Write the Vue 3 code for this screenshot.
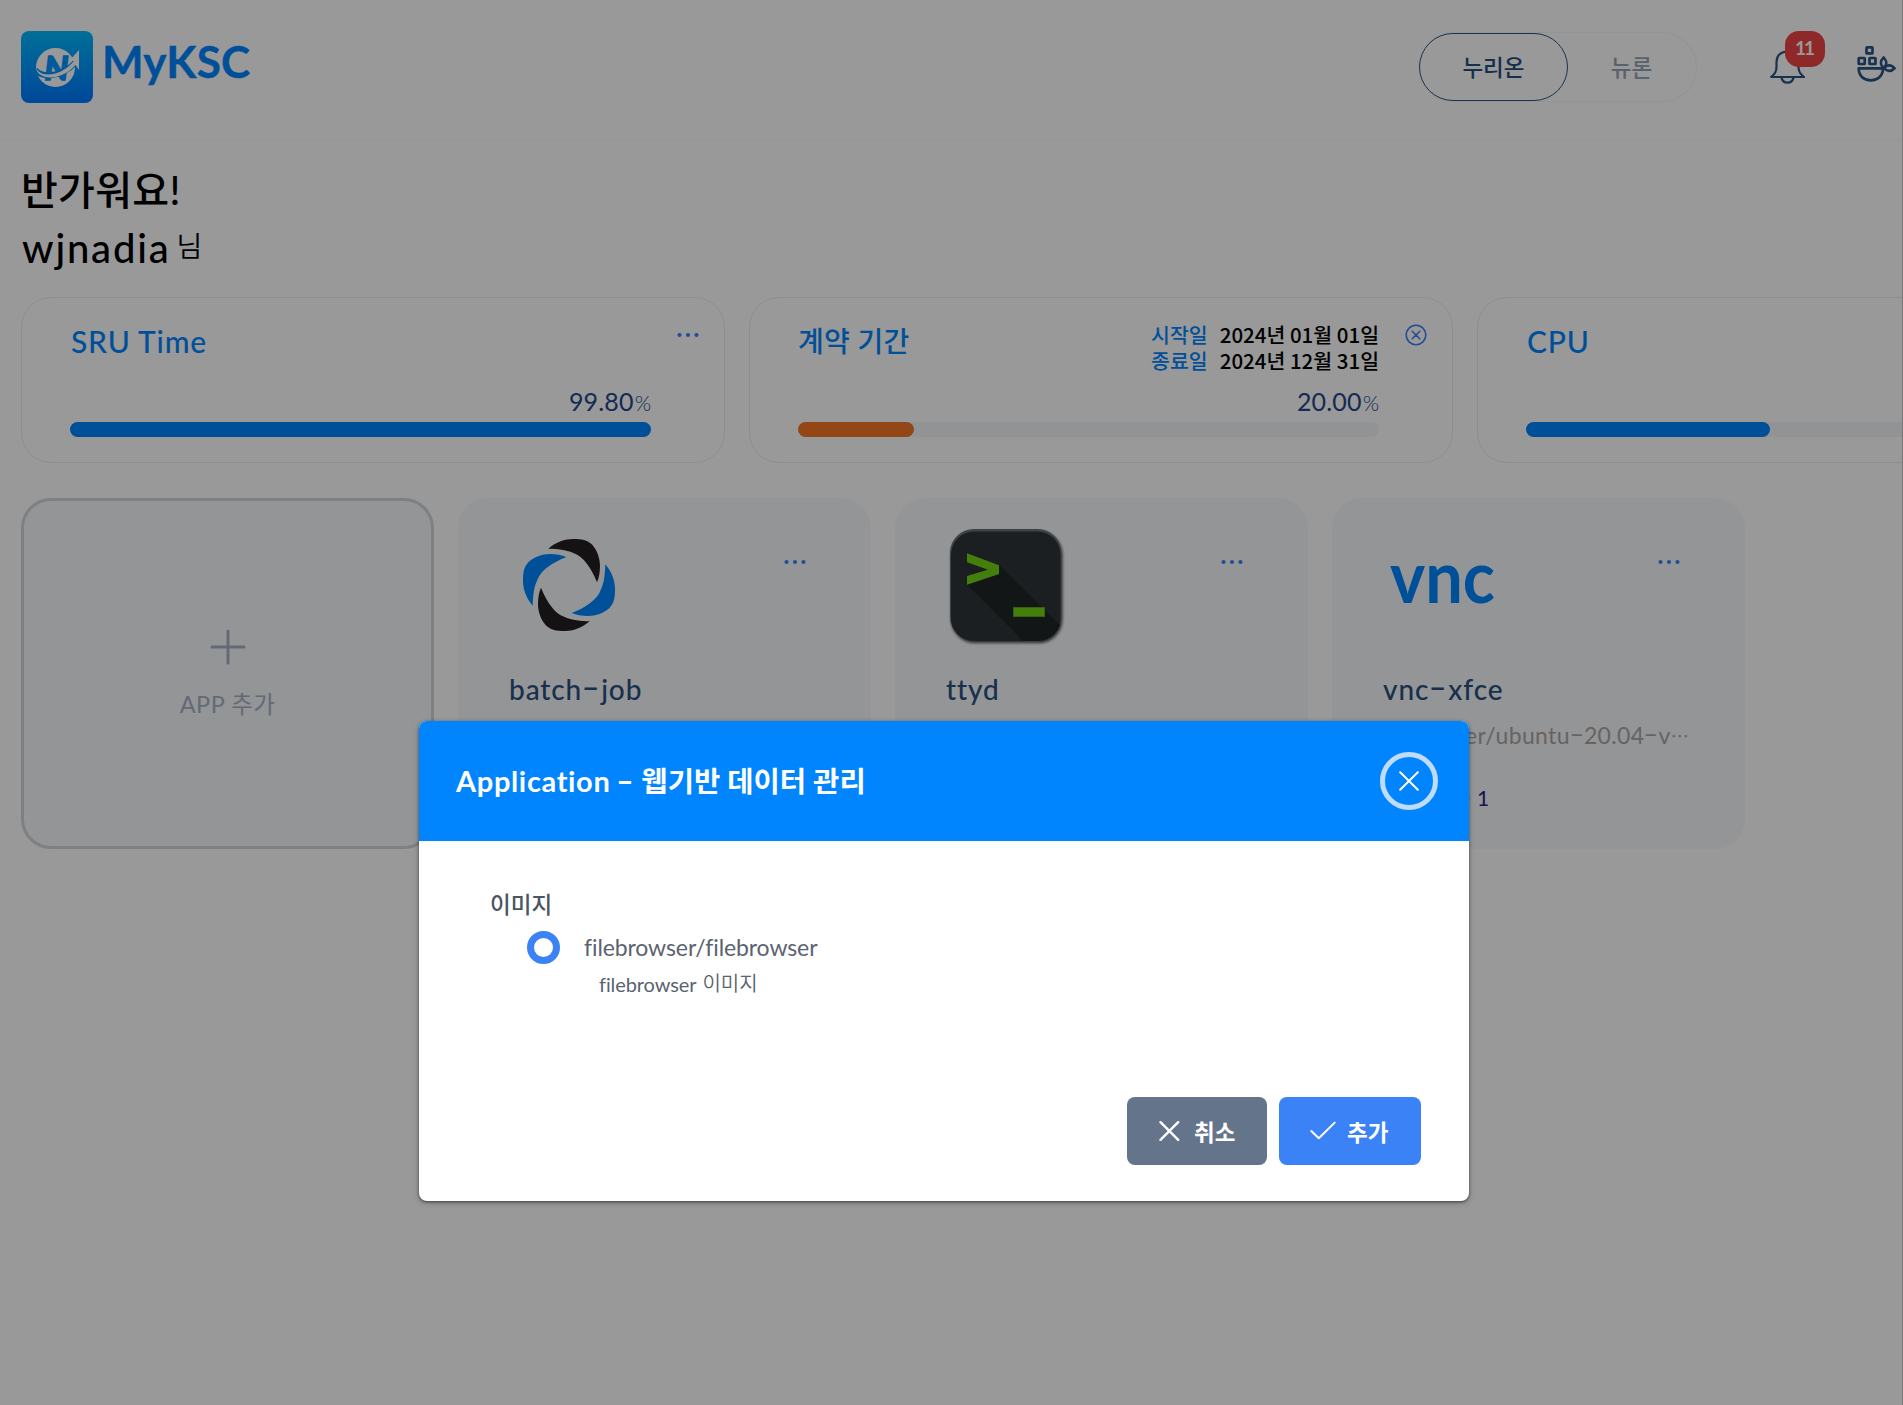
<script setup>
const stats = [
  { title: 'SRU Time', value: '99.80', width: '100%', color: '#0085ff', menu: 'dots' },
  {
    title: '계약 기간', value: '20.00', width: '20%', color: '#f57625', menu: 'close', korean: true,
    dates: [{ label: '시작일', date: '2024년 01월 01일' }, { label: '종료일', date: '2024년 12월 31일' }],
  },
  { title: 'CPU', value: '', width: '42%', color: '#0085ff', menu: 'dots' },
]
const apps = [
  { name: 'batch-job', icon: 'batch' },
  { name: 'ttyd', icon: 'ttyd' },
  { name: 'vnc-xfce', icon: 'vnc', image: 'er/ubuntu-20.04-v', count: 1 },
]
// Splits a name so that its hyphens can be drawn wide and raised.
const parts = (text) => text.split(/(-)/)
</script>

<template>
  <div class="screen">
    <header class="topbar">
      <div class="brand">
        <svg class="brand-mark" viewBox="0 0 72 72">
          <defs>
            <linearGradient id="brandFill" x1="0" y1="0" x2="0" y2="1">
              <stop offset="0" stop-color="#00b9ff" /><stop offset="1" stop-color="#0078ff" />
            </linearGradient>
          </defs>
          <rect width="72" height="72" rx="8" fill="url(#brandFill)" />
          <circle cx="34.5" cy="36.5" r="19.5" fill="#fff" />
          <text x="23.5" y="49" class="brand-n" textLength="24" lengthAdjust="spacingAndGlyphs">N</text>
          <path d="M14 38 C17 46 38 49 55 31" fill="none" stroke="#0094ff" stroke-width="6" />
          <path d="M15.5 33 C12 45 36 50 53 30 L48 30 L58 19 V39 L54.500 34 C37 54 11 47 15.500 33Z" fill="#fff" />
        </svg>
        <span class="brand-name">MyKSC</span>
      </div>
      <div class="switch">
        <button class="switch-item active">누리온</button>
        <button class="switch-item">뉴론</button>
      </div>
      <div class="bell">
        <svg width="36" height="35" viewBox="0 0 36 35" fill="none" stroke="#2b5486" stroke-width="2.200" stroke-linejoin="round" stroke-linecap="round">
          <path d="M1.200 27 C4.500 24 6.500 22 6.500 17 V12 C6.500 5.500 11 1.500 17.500 1.500 C24 1.500 28.500 5.500 28.500 12 V17 C28.500 22 30.500 24 34 27Z" />
          <path d="M11.500 27.500 C12.500 34.300 22.500 34.300 23.500 27.500" />
        </svg>
        <span class="badge">11</span>
      </div>
      <svg class="bowl" width="40" height="37" viewBox="0 0 40 37" fill="none" stroke="#2b5486" stroke-width="2.700">
        <rect x="9.500" y="1.400" width="6" height="6" rx=".5" />
        <rect x="1.700" y="12" width="6" height="6" rx=".5" />
        <rect x="12.500" y="12" width="6" height="6" rx=".5" />
        <path d="M1.700 22.300 H26 C26 30 20.500 34.300 13.800 34.300 C7 34.300 1.700 30 1.700 22.300Z" stroke-linejoin="round" />
        <path d="M26.700 11.500 C23 15 23 19 26.500 21.500 C30.500 19 30 15 26.700 11.500Z" stroke-width="2.500" />
        <path d="M27 22 C30 18.500 34.500 18.500 37.500 22.300 C34 26 30 25.800 27 22Z" stroke-width="2.700" />
      </svg>
    </header>

    <main class="content">
      <section class="hello">
        <p class="hello-line">반가워요!</p>
        <p class="hello-user"><span class="user">wjnadia</span><span class="suffix">님</span></p>
      </section>

      <section class="stats">
        <article v-for="s in stats" :key="s.title" class="stat">
          <div class="stat-main">
            <div class="stat-head">
              <h2 :class="{ korean: s.korean }">{{ s.title }}</h2>
              <dl v-if="s.dates" class="dates">
                <div v-for="d in s.dates" :key="d.label"><dt>{{ d.label }}</dt><dd>{{ d.date }}</dd></div>
              </dl>
            </div>
            <p class="value"><template v-if="s.value"><span class="num">{{ s.value }}</span><span class="unit">%</span></template></p>
            <div class="track"><div class="fill" :style="{ width: s.width, background: s.color }"></div></div>
          </div>
          <svg v-if="s.menu === 'dots'" class="menu" width="22" height="22" viewBox="0 0 22 22" fill="#3b82f6">
            <circle cx="2.500" cy="11" r="2.100" /><circle cx="11" cy="11" r="2.100" /><circle cx="19.500" cy="11" r="2.100" />
          </svg>
          <svg v-else class="menu" width="22" height="22" viewBox="0 0 22 22" fill="none" stroke="#3b82f6" stroke-width="1.600" stroke-linecap="round">
            <circle cx="11" cy="11" r="9.800" /><path d="M7.200 7.200 L14.800 14.800 M14.800 7.200 L7.200 14.800" />
          </svg>
        </article>
      </section>

      <section class="apps">
        <article class="app add">
          <svg width="36" height="36" viewBox="0 0 36 36" stroke="#a6b1c3" stroke-width="3" stroke-linecap="round"><path d="M2 18 H34 M18 2 V34" /></svg>
          <span>APP 추가</span>
        </article>
        <article v-for="a in apps" :key="a.name" class="app">
          <div class="app-top">
            <svg v-if="a.icon === 'batch'" class="i-batch" width="92" height="92" viewBox="0 0 92 92">
              <g v-for="n in 4" :key="n" :transform="`rotate(${n * 90} 46 46)`">
                <path :fill="n % 2 ? '#0085ff' : '#231f20'" d="M25.300 9.700 C33 3 42 0 50 0 C59 0 64 1 69 5.500 C74 11 77 19 77 27 C77 33 76 39 74 43.300 C71 36 68 30 63.700 24.500 C60 19.500 56 16 50.300 14 C43 10.500 34 10 25.300 9.700Z" />
              </g>
            </svg>
            <svg v-else-if="a.icon === 'ttyd'" class="i-ttyd" width="112" height="112" viewBox="0 0 112 112">
              <defs><clipPath id="tile"><rect width="111.500" height="112" rx="24" /></clipPath></defs>
              <g clip-path="url(#tile)">
                <rect width="112" height="112" fill="#6b6f72" />
                <rect x="1" y="2.500" width="109.500" height="110" rx="23" fill="#2f3537" />
                <path d="M17 33 L49 36 L112 98 V112 H73 L17 55.700 L38 41Z" fill="#202527" />
                <path d="M17 24.300 L49 36.300 V45 L17 55.700 V47 L38 40.700 L17 33.300Z" fill="#73d413" />
                <rect x="63.500" y="78.500" width="31" height="9" fill="#73d413" stroke="#5aa512" />
              </g>
            </svg>
            <svg v-else class="i-vnc" width="106" height="40" viewBox="0 0 106 40"><text x="0" y="38" textLength="105" lengthAdjust="spacingAndGlyphs">vnc</text></svg>
            <svg class="menu" width="22" height="22" viewBox="0 0 22 22" fill="#3b82f6">
              <circle cx="2.500" cy="11" r="2.100" /><circle cx="11" cy="11" r="2.100" /><circle cx="19.500" cy="11" r="2.100" />
            </svg>
          </div>
          <h3><span v-for="(t, i) in parts(a.name)" :key="i" :class="{ dash: t === '-' }">{{ t }}</span></h3>
          <p v-if="a.image" class="image"><span v-for="(t, i) in parts(a.image)" :key="i" :class="{ dash: t === '-' }">{{ t }}</span><span class="more">…</span></p>
          <p v-if="a.count" class="count"><i></i><span>{{ a.count }}</span></p>
        </article>
      </section>
    </main>

    <div class="mask">
      <div class="dialog">
        <div class="dialog-head">
          <h1><span class="lat">Application</span> <span class="lat dash">-</span> <span>웹기반 데이터 관리</span></h1>
          <button class="close">
            <svg width="20" height="20" viewBox="0 0 20 20" stroke="#fff" stroke-width="2" stroke-linecap="round"><path d="M1.200 1.200 L18.800 18.800 M18.800 1.200 L1.200 18.800" /></svg>
          </button>
        </div>
        <div class="dialog-body">
          <p class="label">이미지</p>
          <div class="option"><span class="radio"></span><span class="opt">filebrowser/filebrowser</span></div>
          <p class="note"><span class="note-l">filebrowser</span><span class="note-k">이미지</span></p>
        </div>
        <div class="dialog-foot">
          <button class="btn cancel">
            <svg width="21" height="20" viewBox="0 0 21 20" stroke="#fff" stroke-width="2.400" stroke-linecap="round"><path d="M1.500 1.200 L19.200 18.800 M19.200 1.200 L1.500 18.800" /></svg>
            <span>취소</span>
          </button>
          <button class="btn add-btn">
            <svg width="26" height="20" viewBox="0 0 26 20" fill="none" stroke="#fff" stroke-width="2" stroke-linecap="round" stroke-linejoin="round"><path d="M1.300 10 L8.800 17.300 L24.700 1.600" /></svg>
            <span>추가</span>
          </button>
        </div>
      </div>
    </div>
  </div>
</template>

<style>
body { margin: 0; overflow: hidden; background: #fff; }
</style>

<style scoped>
* { box-sizing: border-box; margin: 0; padding: 0; }
.screen {
  position: relative; width: 1903px; height: 1405px; overflow: hidden; background: #fff; color: #000;
  font-family: Lato, "Noto Sans CJK KR", sans-serif; font-variant-ligatures: none;
}
button { font-family: inherit; border: 0; background: none; }
svg { display: block; flex: none; }
.dash { display: inline-block; transform: translateY(-2px) scaleX(1.75); text-align: center; }

.topbar { display: flex; align-items: flex-start; height: 140px; padding-left: 21px; border-bottom: 1px solid #f8f8fa; }
.brand { display: flex; width: 1397px; padding-top: 31px; }
.brand-mark { width: 72px; height: 72px; }
.brand-n { font: italic 900 33px Lato, sans-serif; fill: #0094ff; stroke: #0094ff; stroke-width: 1.5px; }
.brand-name { margin-left: 9px; font-size: 44px; font-weight: 700; line-height: 60px; letter-spacing: .2px; color: #0085ff; -webkit-text-stroke: .4px #0085ff; }
.switch { display: flex; width: 279px; height: 70px; margin-top: 32px; padding: 1px; border-radius: 35px; border: 1px solid #f4f5f6; border-left-color: transparent; }
.switch-item { width: 128px; color: #94a3b8; font: 500 22.500px "Noto Sans CJK KR", sans-serif; height: 68px; margin-top: -1px; padding-bottom: 2px; }
.switch-item.active { width: 150px; margin-left: -1px; border: 1px solid #2b5486; border-radius: 34px; color: #264f80; }
.bell { position: relative; width: 36px; margin: 50px 0 0 73px; }
.badge { position: absolute; left: 15px; top: -19px; width: 40px; height: 36px; border-radius: 14px; background: #ef4444; color: #fff; font-size: 19px; font-weight: 700; line-height: 34px; text-align: center; letter-spacing: -2px; padding-right: 2px; }
.bowl { margin: 46px 0 0 51px; }

.content { padding-left: 21px; }
.hello { height: 157px; padding-top: 22px; }
.hello-line { font-size: 40px; font-weight: 500; line-height: 57px; letter-spacing: .3px; }
.hello-user { display: flex; height: 60px; align-items: flex-start; }
.user { margin-left: 1px; font-size: 40px; line-height: 58px; font-weight: 500; letter-spacing: 1.800px; }
.suffix { margin-left: 6px; font-size: 28px; line-height: 54px; font-weight: 350; }

.stats { display: flex; gap: 24px; height: 166px; }
.stat { display: flex; flex: none; width: 704px; height: 166px; padding: 23px 25px 0 48px; justify-content: space-between; border: 1px solid #ecedef; border-radius: 30px; }
.stat-main { width: 581px; }
.stat-head { display: flex; justify-content: space-between; height: 64px; }
.stat-head h2 { padding-left: 1px; font-size: 30px; font-weight: 500; line-height: 40px; letter-spacing: .8px; color: #0085ff; }
.stat-head h2.korean { padding-left: 0; font-size: 28px; letter-spacing: .3px; }
.dates div { display: flex; justify-content: flex-end; gap: 12px; height: 26px; font: 500 20.500px/27px "Noto Sans CJK KR", sans-serif; }
.dates dt { color: #0085ff; }
.value { display: flex; justify-content: flex-end; align-items: baseline; height: 37px; line-height: 32px; color: #24468c; }
.num { font-size: 25px; letter-spacing: .15px; }
.unit { font-size: 21px; margin-left: 1px; font-weight: 300; }
.track { height: 15px; border-radius: 8px; background: #f4f6f9; }
.fill { height: 15px; border-radius: 8px; }
.stat > .menu { margin-top: 3px; }

.apps { display: flex; gap: 24px; margin-top: 35px; }
.app { flex: none; width: 413px; height: 351px; border-radius: 30px; background: #f7f9fb; }
.app.add { display: flex; flex-direction: column; align-items: center; padding-top: 128px; border: 3px solid #d0d8e0; color: #a6b1c3; }
.app.add span { margin-top: 20px; font-size: 23.500px; line-height: 39px; letter-spacing: .5px; }
.app-top { display: flex; height: 164px; padding: 0 65px 0 52px; align-items: center; justify-content: space-between; }
.app-top .menu { margin-bottom: 36px; }
.i-batch { margin: 10px 0 0 13px; }
.i-ttyd { margin: 10px 0 0 3px; filter: drop-shadow(1px 2px 1.500px rgba(0, 0, 0, .7)); }
.i-vnc { margin: 10px 0 0 6px; }
.i-vnc text { font: 700 72px Lato, sans-serif; fill: #0085ff; }
.app h3 { padding: 7px 0 0 51px; font-size: 28px; font-weight: 500; line-height: 40px; letter-spacing: .9px; color: #28507f; }
.app h3 .dash { width: 19px; }
.image { display: flex; justify-content: flex-end; height: 46px; padding: 9px 56px 0 0; font-size: 23px; line-height: 34px; letter-spacing: .35px; color: #a9a7a5; }
.image .dash { width: 14px; }
.more { font-family: "Noto Sans CJK KR", sans-serif; font-size: 18px; }
.count { display: flex; align-items: center; height: 52px; padding: 33px 0 0 114px; color: #26267f; font-size: 21px; }
.count i { width: 24px; height: 24px; border: 3px solid #d8dee8; border-radius: 50%; margin-right: 7px; }

.mask { position: absolute; inset: 0; display: flex; padding: 721px 0 0 419px; background: rgba(0, 0, 0, .4); border-right: 1px solid #777; }
.dialog { width: 1050px; height: 480px; border-radius: 8px; background: #fff; overflow: hidden; box-shadow: 0 1px 3px rgba(0, 0, 0, .5), 0 2px 6px rgba(0, 0, 0, .2); }
.dialog-head { display: flex; justify-content: space-between; align-items: center; height: 120px; padding: 0 31px 0 37px; background: #0085ff; }
.dialog-head h1 { font-size: 28.600px; font-weight: 700; line-height: 40px; color: #fff; }
.lat { font-size: 29px; letter-spacing: .65px; }
.lat.dash { width: 17px; transform: translateY(-1px) scaleX(1.6); }
.close { display: flex; align-items: center; justify-content: center; width: 58px; height: 58px; border: 5px solid #bfdbfe; border-radius: 50%; }
.dialog-body { height: 256px; padding: 46px 0 0 71px; color: #4b5563; }
.label { font-size: 22.500px; font-weight: 500; line-height: 36px; }
.option { display: flex; align-items: center; height: 34px; margin: 7px 0 0 37px; }
.radio { width: 33px; height: 33px; border: 7px solid #3b82f6; border-radius: 50%; }
.opt { margin-left: 24px; font-size: 23px; letter-spacing: -.1px; color: #5a6370; }
.note { display: flex; margin: 2px 0 0 109px; font-size: 20px; line-height: 36px; color: #5a6370; }
.note-l { letter-spacing: -.1px; }
.note-k { margin-left: 6px; line-height: 35px; font-weight: 350; }
.dialog-foot { display: flex; gap: 12px; justify-content: flex-end; padding-right: 48px; }
.btn { display: flex; align-items: center; height: 68px; border-radius: 8px; color: #fff; font-size: 22.500px; font-weight: 700; }
.cancel { width: 140px; padding-left: 32px; background: #64748b; }
.cancel span { margin-left: 14px; }
.add-btn { width: 142px; padding-left: 31px; background: #3b82f6; }
.add-btn span { margin-left: 11px; }
</style>
